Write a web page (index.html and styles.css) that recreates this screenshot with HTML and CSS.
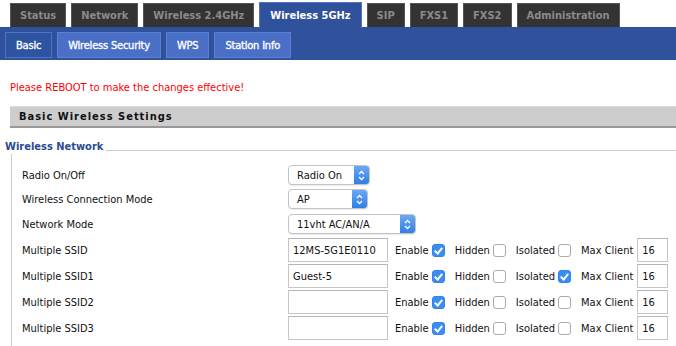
FILE: index.html
```html
<!DOCTYPE html>
<html lang="en">
<head>
    <meta charset="UTF-8">
    <title>Wireless 5GHz - Basic</title>
    <link rel="stylesheet" href="styles.css">
</head>
<body>
    <div class="topnav">
        <a class="tab">Status</a>
        <a class="tab">Network</a>
        <a class="tab">Wireless 2.4GHz</a>
        <a class="tab active">Wireless 5GHz</a>
        <a class="tab">SIP</a>
        <a class="tab">FXS1</a>
        <a class="tab">FXS2</a>
        <a class="tab">Administration</a>
    </div>
    <div class="subnav">
        <a class="subtab active">Basic</a>
        <a class="subtab">Wireless Security</a>
        <a class="subtab">WPS</a>
        <a class="subtab">Station Info</a>
    </div>

    <p class="notice">Please REBOOT to make the changes effective!</p>

    <div class="section-head">Basic Wireless Settings</div>

    <div class="group-title">Wireless Network</div>
    <div class="group-body">
        <div class="row short">
            <span class="label">Radio On/Off</span>
            <div class="select w80"><span class="value">Radio On</span><span class="stepper"><svg width="7" height="11" viewBox="0 0 7 11"><path d="M1 4 L3.5 1.5 L6 4 M1 7 L3.5 9.5 L6 7" fill="none" stroke="#fff" stroke-width="1.3"/></svg></span></div>
        </div>
        <div class="row short">
            <span class="label">Wireless Connection Mode</span>
            <div class="select w78"><span class="value">AP</span><span class="stepper"><svg width="7" height="11" viewBox="0 0 7 11"><path d="M1 4 L3.5 1.5 L6 4 M1 7 L3.5 9.5 L6 7" fill="none" stroke="#fff" stroke-width="1.3"/></svg></span></div>
        </div>
        <div class="row">
            <span class="label">Network Mode</span>
            <div class="select w126"><span class="value">11vht AC/AN/A</span><span class="stepper"><svg width="7" height="11" viewBox="0 0 7 11"><path d="M1 4 L3.5 1.5 L6 4 M1 7 L3.5 9.5 L6 7" fill="none" stroke="#fff" stroke-width="1.3"/></svg></span></div>
        </div>
        <div class="row">
            <span class="label">Multiple SSID</span>
            <div class="ssid">
                <input class="text" type="text" value="12MS-5G1E0110">
                <span class="opt">Enable</span><input class="check" type="checkbox" checked>
                <span class="opt">Hidden</span><input class="check" type="checkbox">
                <span class="opt">Isolated</span><input class="check" type="checkbox">
                <span class="opt">Max Client</span><input class="text small" type="text" value="16">
            </div>
        </div>
        <div class="row">
            <span class="label">Multiple SSID1</span>
            <div class="ssid">
                <input class="text" type="text" value="Guest-5">
                <span class="opt">Enable</span><input class="check" type="checkbox" checked>
                <span class="opt">Hidden</span><input class="check" type="checkbox">
                <span class="opt">Isolated</span><input class="check" type="checkbox" checked>
                <span class="opt">Max Client</span><input class="text small" type="text" value="16">
            </div>
        </div>
        <div class="row">
            <span class="label">Multiple SSID2</span>
            <div class="ssid">
                <input class="text" type="text" value="">
                <span class="opt">Enable</span><input class="check" type="checkbox" checked>
                <span class="opt">Hidden</span><input class="check" type="checkbox">
                <span class="opt">Isolated</span><input class="check" type="checkbox">
                <span class="opt">Max Client</span><input class="text small" type="text" value="16">
            </div>
        </div>
        <div class="row">
            <span class="label">Multiple SSID3</span>
            <div class="ssid">
                <input class="text" type="text" value="">
                <span class="opt">Enable</span><input class="check" type="checkbox" checked>
                <span class="opt">Hidden</span><input class="check" type="checkbox">
                <span class="opt">Isolated</span><input class="check" type="checkbox">
                <span class="opt">Max Client</span><input class="text small" type="text" value="16">
            </div>
        </div>
    </div>
</body>
</html>
```

FILE: styles.css
```css
body {
    margin: 0;
    font-family: 'DejaVu Sans Condensed', 'DejaVu Sans', sans-serif;
    font-size: 11px;
    color: #111;
    background-color: #fff;
}

.topnav {
    display: flex;
    align-items: flex-end;
    gap: 5px;
    padding: 2px 0 0 10px;
    height: 25px;
}

.tab {
    display: block;
    height: 23px;
    line-height: 24px;
    padding: 0 9px;
    background-color: #333;
    border: 1px solid #555;
    border-bottom: none;
    color: #8a8a8a;
    font-weight: bold;
}

.tab.active {
    height: 25px;
    line-height: 26px;
    padding: 0 10px;
    background-color: #30519b;
    border-color: #4f74c8;
    color: #fff;
    position: relative;
    top: 1px;
}

.subnav {
    display: flex;
    gap: 5px;
    height: 33px;
    padding: 5px 0 0 5px;
    box-sizing: border-box;
    background-color: #30519b;
}

.subtab {
    display: block;
    height: 24px;
    line-height: 25px;
    padding: 0 10px;
    background-color: #4a6fc6;
    border: 1px solid #5b80d2;
    color: #fff;
    -webkit-text-stroke: 0.35px #fff;
    letter-spacing: -0.2px;
}

.subtab.active {
    background-color: #2e54a1;
    border-color: #4d72c6;
}

.notice {
    margin: 21px 0 0 10px;
    color: #f00;
    line-height: 14px;
}

.section-head {
    margin: 11px 0 0 10px;
    height: 19px;
    line-height: 19px;
    padding-left: 9px;
    background-color: #cdcdcd;
    border-top: 1px solid #ddd;
    border-bottom: 2px solid #999;
    font-weight: bold;
    letter-spacing: 1px;
    color: #111;
}

.group-title {
    display: flex;
    align-items: center;
    margin: 12px 0 0 5px;
    color: #2b4c93;
    font-weight: bold;
    line-height: 14px;
}

.group-title::after {
    content: '';
    flex: 1;
    margin-left: 3px;
    margin-top: 6px;
    border-top: 1px solid #ccc;
}

.group-body {
    margin-left: 11px;
    border-left: 1px solid #ccc;
    padding: 9px 0 6px 10px;
}

.row {
    display: grid;
    grid-template-columns: 266px auto;
    align-items: center;
    min-height: 26px;
}

.row.short {
    min-height: 24px;
}

.label {
    color: #111;
}

.select {
    display: flex;
    align-items: center;
    height: 18px;
    border: 1px solid #c3c3c3;
    border-radius: 4px;
    background-color: #fff;
    box-shadow: 0 1px 1px rgba(0, 0, 0, 0.08);
    overflow: hidden;
}

.w80 { width: 80px; }
.w78 { width: 78px; }
.w126 { width: 126px; }

.select .value {
    flex: 1;
    padding-left: 8px;
}

.stepper {
    display: flex;
    align-items: center;
    justify-content: center;
    width: 15px;
    height: 100%;
    background: linear-gradient(#6aa9f5, #2f7fe6);
}

.ssid {
    display: flex;
    align-items: center;
}

.text {
    box-sizing: border-box;
    width: 100px;
    height: 24px;
    padding: 0 0 0 4px;
    margin: 0;
    border: 1px solid #c6c6c6;
    border-top-color: #b5b5b5;
    font-family: inherit;
    font-size: 11px;
    color: #111;
}

.text.small {
    width: 31px;
    margin-left: 4px;
}

.opt {
    margin-left: 7px;
}

.check {
    appearance: none;
    box-sizing: border-box;
    width: 13px;
    height: 13px;
    margin: 0 0 0 3px;
    border: 1px solid #aaa;
    border-radius: 3px;
    background-color: #fff;
    position: relative;
}

.check + .opt {
    margin-left: 10px;
}

.check:checked {
    background-color: #3a8ef3;
    border-color: #3383ea;
}

.check:checked::after {
    content: '';
    position: absolute;
    left: 3px;
    top: 1px;
    width: 3px;
    height: 6px;
    border: solid #fff;
    border-width: 0 2px 2px 0;
    transform: rotate(40deg);
}
```
